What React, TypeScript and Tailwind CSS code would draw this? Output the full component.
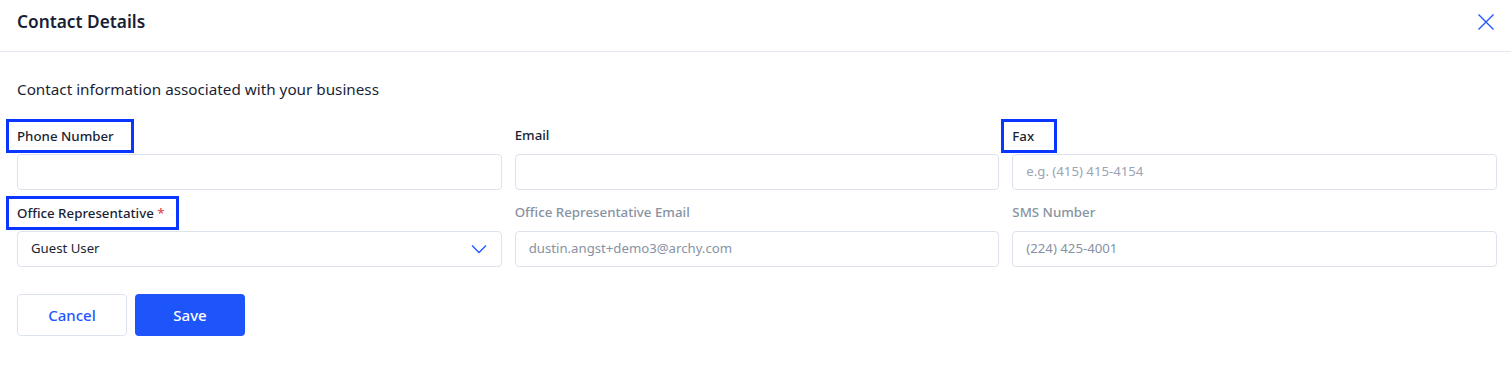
import React from "react";

const Highlight = ({ children, extra = "" }: { children: React.ReactNode; extra?: string }) => (
  <span className="relative inline-block leading-[18px]">
    {children}
    <span className={`pointer-events-none absolute -left-[11px] -top-[7px] -bottom-[8px] border-[3px] border-[#0a36ff] ${extra}`}></span>
  </span>
);

const Field = ({
  label,
  highlight,
  required,
  disabled,
  placeholder,
  value,
  select,
  boxRight = "-right-[4px]",
}: {
  label: string;
  highlight?: boolean;
  required?: boolean;
  disabled?: boolean;
  placeholder?: string;
  value?: string;
  select?: boolean;
  boxRight?: string;
}) => {
  const text = (
    <span className={`text-[13.3px] leading-[18px] font-medium ${disabled ? "text-[#8792a2]" : "text-[#1a1f36]"}`}>
      {label}
      {required && <span className="text-[#e5484d]"> *</span>}
    </span>
  );
  return (
    <div className="flex flex-col">
      <div className="h-[18px] flex items-center leading-[18px]">
        {highlight ? <Highlight extra={boxRight}>{text}</Highlight> : text}
      </div>
      <div className="mt-[10px] h-[36px] rounded-[4px] border border-[#dde3ec] bg-white flex items-center px-[13px] justify-between">
        {value ? (
          <span className={`text-[13.2px] ${disabled ? "text-[#8792a2]" : "text-[#1a1f36]"}`}>{value}</span>
        ) : (
          <span className="text-[13.2px] text-[#9aa4b5]">{placeholder}</span>
        )}
        {select && (
          <svg width="16" height="10" viewBox="0 0 16 10" fill="none" className="mr-[1px]">
            <path d="M1 1.5 L8 8.5 L15 1.5" stroke="#1f56ff" strokeWidth="1.3" />
          </svg>
        )}
      </div>
    </div>
  );
};

export default function App() {
  return (
    <div className="w-[1511px] h-[368px] bg-white" style={{ fontFamily: '"Noto Sans", "Open Sans", sans-serif' }}>
      <div className="h-[52px] flex items-center justify-between pl-[17px] pr-[16px] border-b border-[#e2e8f0]">
        <h1 className="text-[17.3px] font-semibold text-[#1a1f36] -mt-[8px]">Contact Details</h1>
        <svg width="18" height="18" viewBox="0 0 18 18" fill="none" className="-mt-[8px]">
          <path d="M1.5 1.5 L16.5 16.5 M16.5 1.5 L1.5 16.5" stroke="#1f56ff" strokeWidth="1.4" />
        </svg>
      </div>
      <div className="pl-[17px] pr-[14px]">
        <p className="mt-[27px] text-[15.25px] leading-[20px] text-[#1a1f36]">Contact information associated with your business</p>
        <div className="mt-[27px] grid grid-cols-3 gap-x-[13px] gap-y-[13px]">
          <Field label="Phone Number" highlight boxRight="-right-[20px]" />
          <Field label="Email" />
          <Field label="Fax" highlight boxRight="-right-[23px]" placeholder="e.g. (415) 415-4154" />
          <Field label="Office Representative" required highlight boxRight="-right-[14px]" select value="Guest User" />
          <Field label="Office Representative Email" disabled value="dustin.angst+demo3@archy.com" />
          <Field label="SMS Number" disabled value="(224) 425-4001" />
        </div>
        <div className="mt-[27px] flex gap-[8px]">
          <button className="w-[110px] h-[42px] rounded-[4px] border border-[#dde3ec] bg-white text-[15px] font-medium text-[#1f56ff]">
            Cancel
          </button>
          <button className="w-[110px] h-[42px] rounded-[4px] bg-[#1d55fb] text-[15px] font-medium text-white">
            Save
          </button>
        </div>
      </div>
    </div>
  );
}
